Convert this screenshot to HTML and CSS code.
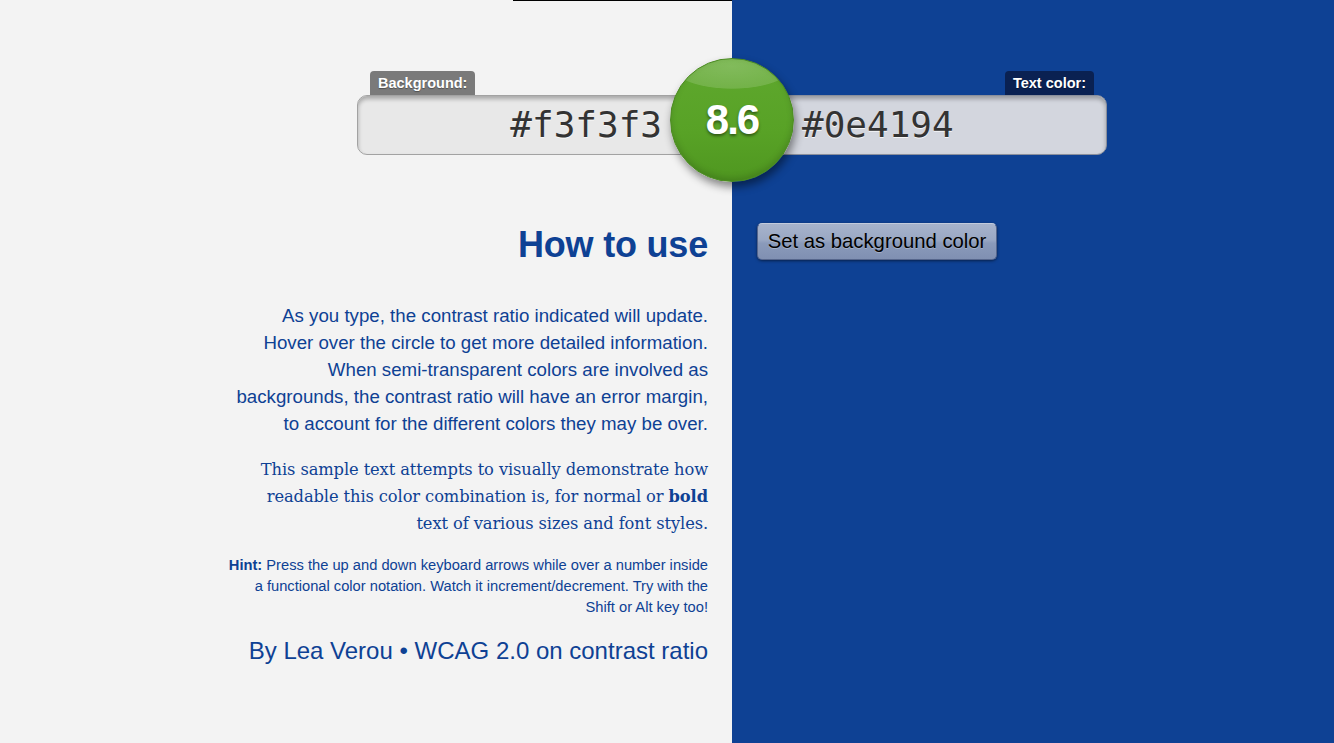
FILE: index.html
```html
<!DOCTYPE html>
<html lang="en">
<head>
<meta charset="utf-8">
<title>Contrast Ratio</title>
<link rel="stylesheet" href="styles.css">
</head>
<body>
<div class="topline"></div>
<header class="picker">
  <div class="field field-bg">
    <span class="label label-bg">Background:</span>
    <div class="input input-bg">#f3f3f3</div>
  </div>
  <div class="field field-fg">
    <span class="label label-fg">Text color:</span>
    <div class="input input-fg">#0e4194</div>
  </div>
  <output class="ratio">8.6</output>
</header>
<main class="content">
  <section class="howto">
    <div class="howto-inner">
      <h1 class="title">How to use</h1>
      <p class="intro">As you type, the contrast ratio indicated will update.<br>Hover over the circle to get more detailed information.<br>When semi-transparent colors are involved as<br>backgrounds, the contrast ratio will have an error margin,<br>to account for the different colors they may be over.</p>
      <p class="sample">This sample text attempts to visually demonstrate how<br>readable this color combination is, for normal or <strong>bold</strong><br>text of various sizes and font styles.</p>
      <p class="hint"><strong>Hint:</strong> Press the up and down keyboard arrows while over a number inside<br>a functional color notation. Watch it increment/decrement. Try with the<br>Shift or Alt key too!</p>
      <p class="credits">By Lea Verou • WCAG 2.0 on contrast ratio</p>
    </div>
  </section>
  <aside class="actions">
    <button class="swap" type="button">Set as background color</button>
  </aside>
</main>
</body>
</html>
```
FILE: styles.css
```css
html, body {
  margin: 0;
  padding: 0;
}
body {
  min-height: 743px;
  background: linear-gradient(to right, #f3f3f3 0, #f3f3f3 732px, #0e4194 732px, #0e4194 100%);
  font-family: "Liberation Sans", Arial, sans-serif;
  color: #0e4194;
  overflow: hidden;
}
.topline {
  margin-left: 513px;
  width: 219px;
  height: 1px;
  background: #000;
}
.picker {
  position: relative;
  display: grid;
  grid-template-columns: 732px 1fr;
  padding-top: 70px;
}
.field {
  display: flex;
  flex-direction: column;
  width: 375px;
}
.field-bg {
  justify-self: end;
}
.field-fg {
  justify-self: start;
}
.label {
  height: 24px;
  line-height: 25px;
  padding: 0 8px;
  font-size: 14.5px;
  font-weight: bold;
  color: #fff;
  border-radius: 4px 4px 0 0;
  text-shadow: 0 1px 1px rgba(0,0,0,.35);
}
.label-bg {
  align-self: flex-start;
  margin-left: 13px;
  background: #7a7a7a;
}
.label-fg {
  align-self: flex-end;
  margin-right: 13px;
  background: #0a2152;
}
.input {
  box-sizing: border-box;
  height: 60px;
  line-height: 58px;
  border: 1px solid #a2a2a2;
  border-radius: 10px;
  font-family: "DejaVu Sans Mono", "Liberation Mono", monospace;
  font-size: 36px;
  color: #333;
  box-shadow: inset 0 3px 4px rgba(0,0,0,.28);
  text-shadow: 0 1px 0 rgba(255,255,255,.8);
}
.input-bg {
  background: #e8e8e8;
  text-align: right;
  padding-right: 69px;
}
.input-fg {
  background: #d3d6de;
  padding-left: 69px;
  border-color: #8a8f9c;
}
.ratio {
  position: absolute;
  left: 670px;
  top: 57px;
  box-sizing: border-box;
  width: 124px;
  height: 124px;
  border-radius: 50%;
  border: 1px solid #4b8a22;
  background:
    radial-gradient(ellipse 80% 30% at 50% 6%, rgba(255,255,255,.22) 0, rgba(255,255,255,.14) 60%, rgba(255,255,255,0) 62%),
    linear-gradient(#5fa82e, #58a226 60%, #4f9720);
  box-shadow: 2px 5px 8px rgba(0,0,0,.45), inset 0 -3px 6px rgba(0,0,0,.15);
  display: flex;
  align-items: center;
  justify-content: center;
  font-size: 42px;
  font-weight: bold;
  letter-spacing: -2px;
  color: #fff;
  text-shadow: 0 2px 3px rgba(0,0,0,.45);
}
.content {
  display: grid;
  grid-template-columns: 732px 1fr;
  margin-top: 69px;
}
.howto {
  padding-right: 24px;
  display: flex;
  justify-content: flex-end;
}
.howto-inner {
  width: 540px;
  text-align: right;
}
.title {
  margin: 0;
  font-size: 36px;
  line-height: 41px;
  font-weight: bold;
  letter-spacing: -0.2px;
}
.intro {
  margin: 37px 0 0;
  font-size: 18.7px;
  line-height: 27px;
}
.sample {
  margin: 19px 0 0;
  font-family: "DejaVu Serif", "Liberation Serif", serif;
  font-size: 16.3px;
  line-height: 27px;
  letter-spacing: -0.1px;
}
.hint {
  margin: 18px 0 0;
  font-size: 14.7px;
  line-height: 21px;
}
.credits {
  margin: 15px 0 0;
  font-size: 24px;
  line-height: 36px;
}
.actions {
  padding-left: 25px;
}
.swap {
  margin-top: -1px;
  box-sizing: border-box;
  width: 240px;
  height: 37px;
  padding: 0 8px;
  border: 1px solid #56668c;
  border-top-color: #c3cbdc;
  border-radius: 5px;
  background: linear-gradient(#a7b3cc 0, #9aa8c4 45%, #8a9aba 55%, #8090b2 100%);
  box-shadow: 0 1px 3px rgba(0,0,0,.5);
  font-family: "Liberation Sans", Arial, sans-serif;
  font-size: 20.3px;
  color: #000;
  text-shadow: 0 1px 0 rgba(255,255,255,.25);
  cursor: pointer;
}
```
